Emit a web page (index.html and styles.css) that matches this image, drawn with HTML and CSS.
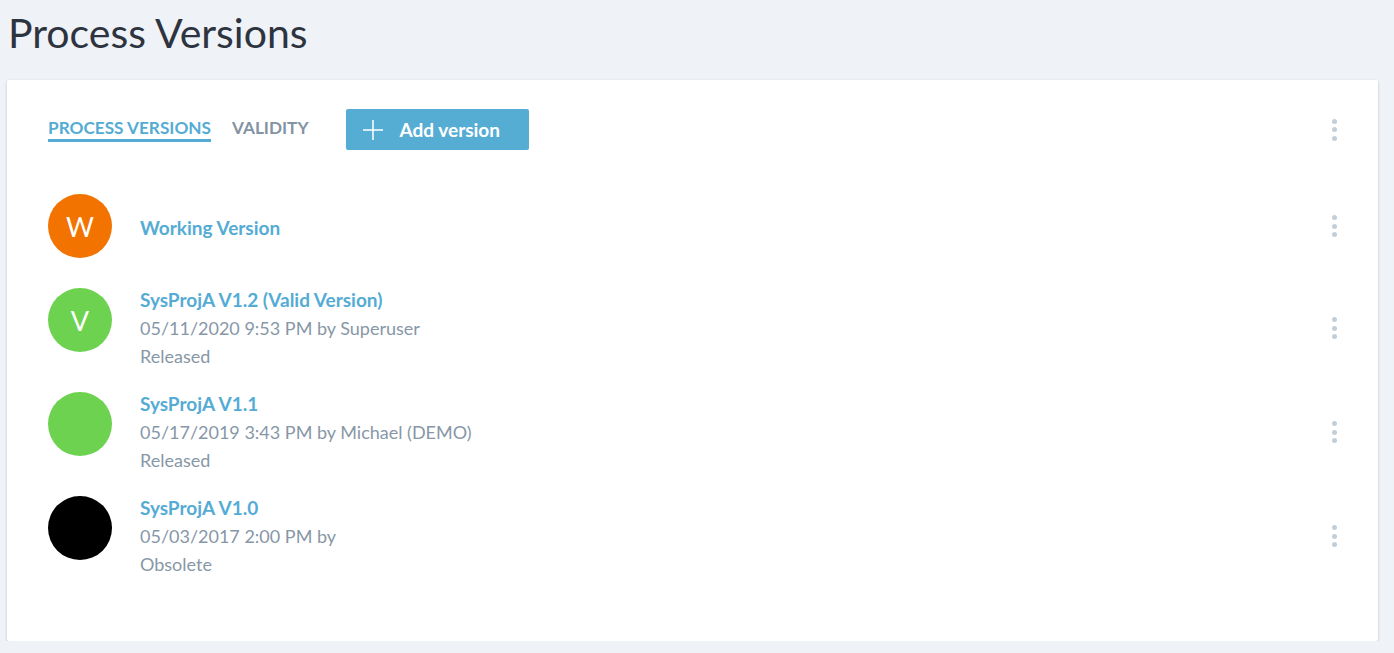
FILE: index.html
```html
<!DOCTYPE html>
<html lang="en">
<head>
    <meta charset="UTF-8">
    <meta name="viewport" content="width=device-width, initial-scale=1.0">
    <title>Process Versions</title>
    <link rel="stylesheet" href="styles.css">
</head>
<body>
    <header class="page-header">
        <h1>Process Versions</h1>
    </header>
    <main class="card">
        <div class="toolbar">
            <nav class="tabs">
                <a class="tab active" href="#">Process Versions</a>
                <a class="tab" href="#">Validity</a>
            </nav>
            <button class="btn-add" type="button">
                <svg width="20" height="20" viewBox="0 0 20 20"><path d="M10 0v20M0 10h20" stroke="#fff" stroke-width="1.5" fill="none"/></svg>
                <span>Add version</span>
            </button>
            <button class="kebab" type="button" aria-label="More"><i></i><i></i><i></i></button>
        </div>

        <ul class="versions">
            <li class="version single">
                <div class="avatar orange">W</div>
                <div class="info">
                    <a class="name" href="#">Working Version</a>
                </div>
                <button class="kebab" type="button" aria-label="More"><i></i><i></i><i></i></button>
            </li>
            <li class="version">
                <div class="avatar green">V</div>
                <div class="info">
                    <a class="name" href="#">SysProjA V1.2 (Valid Version)</a>
                    <div class="meta">05/11/2020 9:53 PM by Superuser</div>
                    <div class="meta">Released</div>
                </div>
                <button class="kebab" type="button" aria-label="More"><i></i><i></i><i></i></button>
            </li>
            <li class="version">
                <div class="avatar green"></div>
                <div class="info">
                    <a class="name" href="#">SysProjA V1.1</a>
                    <div class="meta">05/17/2019 3:43 PM by Michael (DEMO)</div>
                    <div class="meta">Released</div>
                </div>
                <button class="kebab" type="button" aria-label="More"><i></i><i></i><i></i></button>
            </li>
            <li class="version">
                <div class="avatar black"></div>
                <div class="info">
                    <a class="name" href="#">SysProjA V1.0</a>
                    <div class="meta">05/03/2017 2:00 PM by</div>
                    <div class="meta">Obsolete</div>
                </div>
                <button class="kebab" type="button" aria-label="More"><i></i><i></i><i></i></button>
            </li>
        </ul>
    </main>
</body>
</html>
```

FILE: styles.css
```css
body {
    font-family: 'Lato', sans-serif;
    margin: 0;
    padding: 0 16px 0 7px;
    background-color: #eff2f7;
    color: #2d3440;
}

.page-header {
    height: 80px;
}

.page-header h1 {
    margin: 0;
    padding: 10px 0 0 1px;
    font-size: 41px;
    font-weight: 400;
    line-height: 46px;
    color: #2d3440;
}

.card {
    display: block;
    background-color: white;
    box-shadow: 0 1px 3px rgba(0, 0, 0, 0.2);
    border-radius: 2px;
    padding: 29px 41px 53px;
    height: 561px;
    box-sizing: border-box;
}

.toolbar {
    display: flex;
    align-items: center;
    height: 41px;
}

.tabs {
    display: flex;
    gap: 21px;
}

.tab {
    font-size: 17.2px;
    font-weight: 700;
    text-transform: uppercase;
    color: #8393a3;
    text-decoration: none;
    padding-bottom: 1px;
    border-bottom: 3px solid transparent;
    margin-top: -1px;
}

.tab.active {
    color: #54acd4;
    border-bottom-color: #54acd4;
}

.btn-add {
    display: flex;
    align-items: center;
    gap: 17px;
    margin-left: 37px;
    height: 41px;
    padding: 0 29px 0 17px;
    border: none;
    border-radius: 2px;
    background-color: #56add4;
    color: white;
    font-family: inherit;
    font-size: 19px;
    font-weight: 700;
    cursor: pointer;
}

.kebab {
    margin-left: auto;
    width: 6px;
    padding: 0;
    border: none;
    background: none;
    display: flex;
    flex-direction: column;
    align-items: center;
    gap: 3.5px;
    cursor: pointer;
}

.kebab i {
    display: block;
    width: 5px;
    height: 5px;
    border-radius: 50%;
    background-color: #c2cfdb;
}

.versions {
    list-style: none;
    margin: 34px 0 0;
    padding: 0;
}

.version {
    display: flex;
    align-items: center;
    padding: 10px 0;
}

.version.single {
    padding-bottom: 18px;
}

.avatar {
    align-self: flex-start;
    margin-top: 2px;
    width: 64px;
    height: 64px;
    border-radius: 50%;
    flex-shrink: 0;
    display: flex;
    align-items: center;
    justify-content: center;
    color: white;
    font-size: 27px;
}

.single .avatar {
    align-self: center;
    margin-top: 0;
}

.avatar.orange { background-color: #f37300; }
.avatar.green { background-color: #6dd24f; }
.avatar.black { background-color: #000; }

.info {
    margin-left: 28px;
    font-size: 18px;
    line-height: 28px;
}

.single .info {
    padding-top: 4px;
}

.name {
    display: block;
    font-size: 19px;
    font-weight: 700;
    color: #54acd4;
    text-decoration: none;
}

.meta {
    color: #8797a7;
}
```
